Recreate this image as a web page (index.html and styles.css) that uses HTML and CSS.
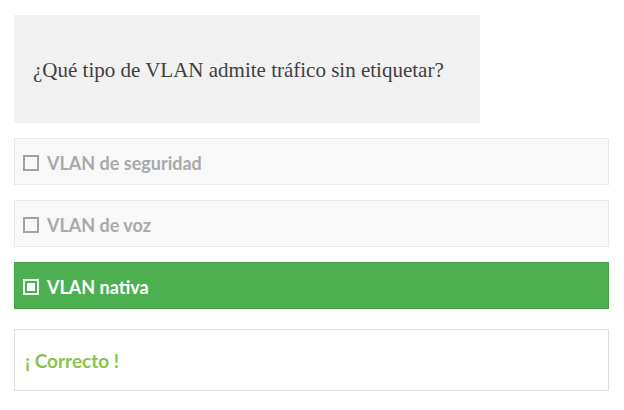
FILE: index.html
```html
<!DOCTYPE html>
<html lang="es">
<head>
<meta charset="utf-8">
<title>Quiz</title>
<link rel="stylesheet" href="styles.css">
</head>
<body>
<div class="quiz">
  <div class="question">¿Qué tipo de VLAN admite tráfico sin etiquetar?</div>
  <ul class="options">
    <li class="option"><span class="box"></span><span class="label">VLAN de seguridad</span></li>
    <li class="option"><span class="box"></span><span class="label">VLAN de voz</span></li>
    <li class="option correct"><span class="box"><span class="dot"></span></span><span class="label">VLAN nativa</span></li>
  </ul>
  <div class="feedback">¡ Correcto !</div>
</div>
</body>
</html>
```
FILE: styles.css
```css
html, body {
  margin: 0;
  padding: 0;
  background: #ffffff;
}
.quiz {
  padding: 15px 15px 0 14px;
  font-family: Lato, "Liberation Sans", sans-serif;
}
.question {
  width: 466px;
  height: 108px;
  box-sizing: border-box;
  background: #f1f1f1;
  display: flex;
  align-items: center;
  padding: 2px 0 0 19px;
  font-family: "Liberation Serif", "DejaVu Serif", serif;
  font-size: 21px;
  white-space: nowrap;
  color: #404040;
}
.options {
  list-style: none;
  margin: 15px 0 0 0;
  padding: 0;
  display: flex;
  flex-direction: column;
  gap: 15px;
}
.option {
  height: 47px;
  box-sizing: border-box;
  border: 1px solid #e9e9e9;
  background: #f8f8f8;
  display: flex;
  align-items: center;
  padding: 2px 0 0 8px;
  gap: 8px;
  font-size: 18px;
  font-weight: 700;
  color: #a9a9a9;
}
.box {
  width: 16px;
  height: 16px;
  box-sizing: border-box;
  border: 2px solid #a3a3a3;
  display: flex;
  align-items: center;
  justify-content: center;
}
.option.correct {
  background: #4caf50;
  border-color: #42a047;
  color: #ffffff;
}
.option.correct .box {
  border-color: #ffffff;
}
.dot {
  width: 8px;
  height: 8px;
  background: #ffffff;
}
.feedback {
  margin-top: 20px;
  height: 62px;
  box-sizing: border-box;
  border: 1px solid #dddddd;
  background: #ffffff;
  display: flex;
  align-items: center;
  padding: 0 0 0 10px;
  font-size: 19px;
  font-weight: 700;
  color: #8bc34a;
}
```
